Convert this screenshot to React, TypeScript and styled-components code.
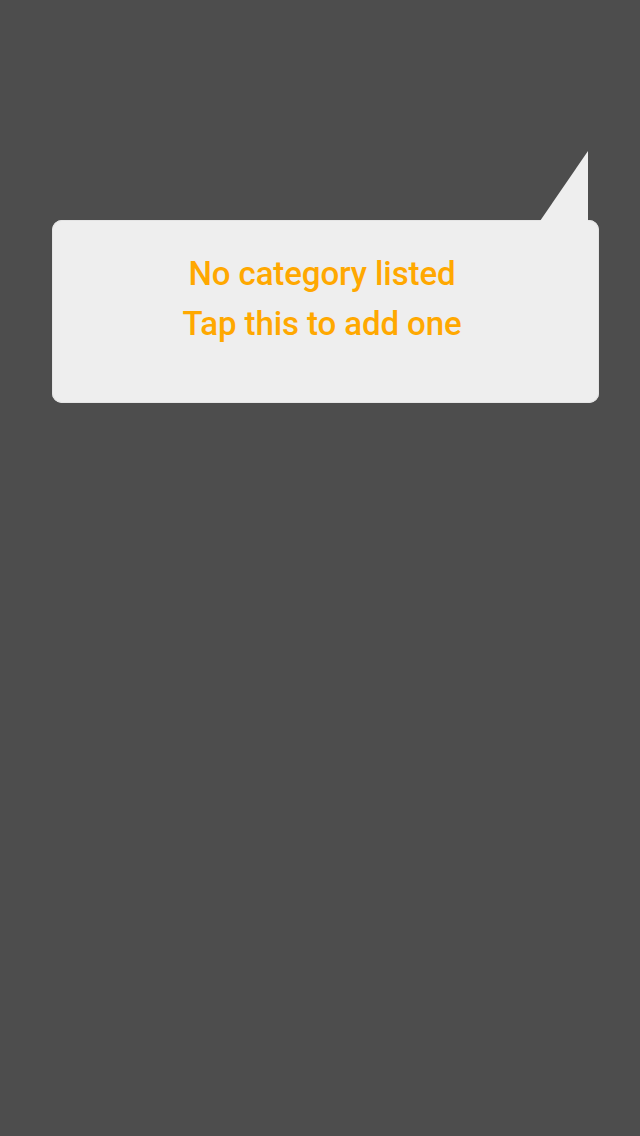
import styled, { createGlobalStyle } from 'styled-components';

const Global = createGlobalStyle`
  html, body {
    margin: 0;
    padding: 0;
    background: #4d4d4d;
  }
  #root {
    min-height: 1136px;
  }
`;

const Screen = styled.div`
  width: 640px;
  height: 1136px;
  background: #4d4d4d;
  padding: 220px 41px 0 52px;
  box-sizing: border-box;
  font-family: 'Roboto', 'Liberation Sans', sans-serif;
`;

const Bubble = styled.button`
  position: relative;
  display: flex;
  flex-direction: column;
  align-items: center;
  width: 547px;
  height: 183px;
  padding: 29px 7px 0 0;
  box-sizing: border-box;
  border: none;
  border-radius: 10px;
  background: #eeeeee;
  box-shadow: inset 0 0 0 1px #e4e4e4;
  cursor: pointer;
  font: inherit;
`;

const Tail = styled.svg`
  position: absolute;
  right: 11px;
  top: -69px;
  width: 48px;
  height: 70px;
`;

const Line = styled.span`
  color: #ffa800;
  font-size: 33px;
  line-height: 50px;
  letter-spacing: -0.1px;
  font-weight: 500;
`;

export default function App() {
  return (
    <>
      <Global />
      <Screen>
        <Bubble type="button">
          <Tail viewBox="0 0 48 70">
            <polygon points="0,70 48,0 48,70" fill="#eeeeee" />
          </Tail>
          <Line>No category listed</Line>
          <Line>Tap this to add one</Line>
        </Bubble>
      </Screen>
    </>
  );
}
